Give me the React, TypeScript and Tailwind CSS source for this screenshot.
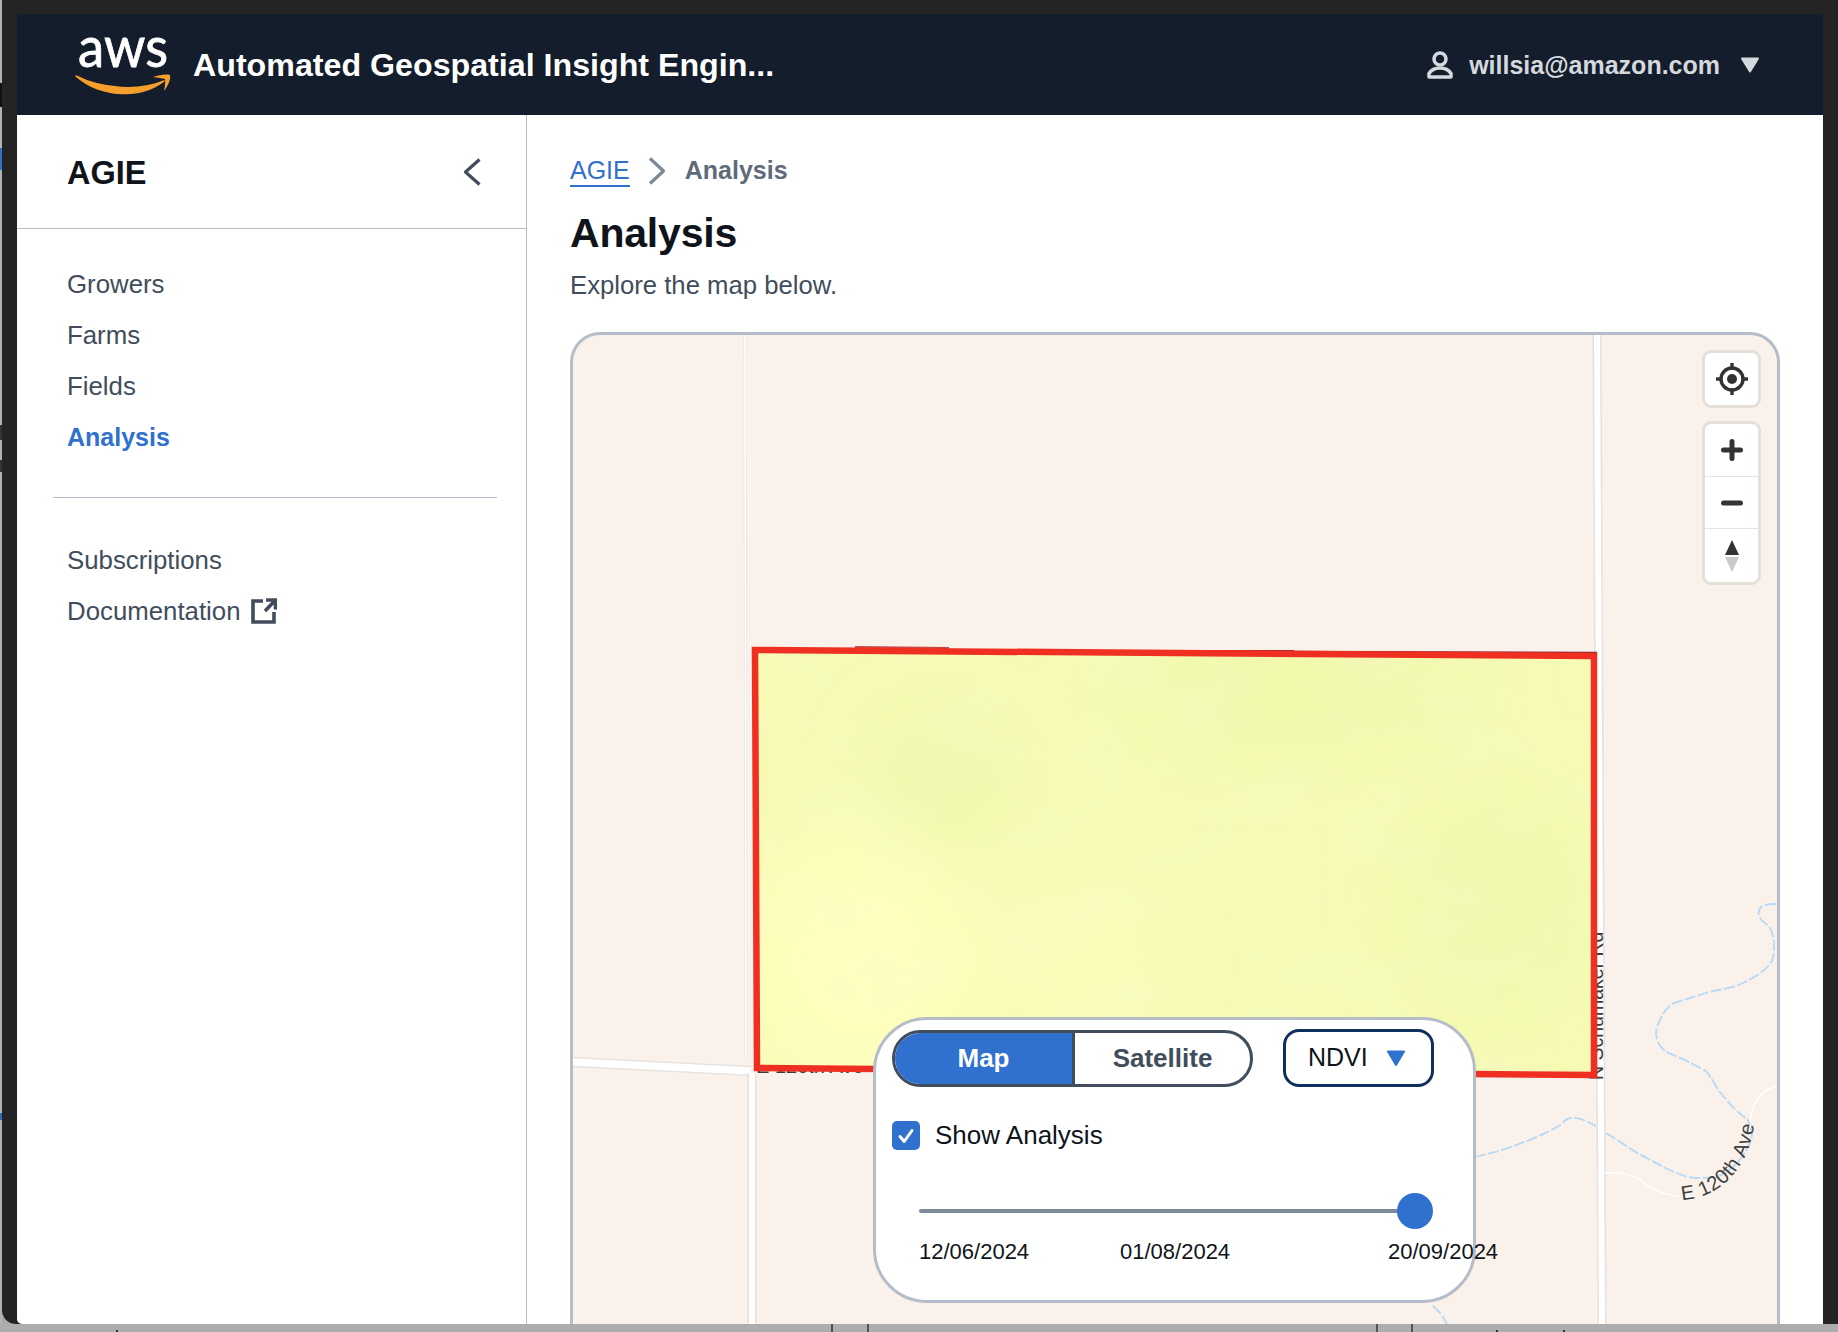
const navTop = ['Growers', 'Farms', 'Fields', 'Analysis'];

const streams = [
  'M1476 1156 L1500 1150 C1515 1145 1525 1141 1533 1138 C1545 1133 1555 1128 1563 1123 C1566 1119 1568 1117 1572 1117 C1580 1116 1588 1120 1597 1125',
  'M1607 1132 C1620 1140 1630 1147 1640 1153 C1652 1159 1662 1165 1673 1170 C1683 1175 1692 1177 1700 1177 C1710 1177 1716 1176 1720 1175 C1730 1170 1736 1165 1740 1160 C1746 1152 1752 1143 1753 1133 C1752 1126 1750 1120 1748 1118',
  'M1777 903 C1770 903 1765 904 1763 905 C1759 909 1759 912 1760 915 C1762 920 1766 922 1770 925 C1774 932 1775 938 1775 943 C1775 950 1775 955 1773 960 C1769 966 1765 970 1760 973 C1752 978 1745 982 1737 985 C1727 988 1717 989 1707 992 C1695 996 1683 999 1673 1003 C1668 1007 1665 1011 1663 1015 C1659 1022 1657 1028 1657 1033 C1658 1040 1660 1044 1663 1047 C1667 1051 1672 1053 1677 1055 C1688 1060 1698 1065 1707 1070 C1712 1076 1716 1084 1720 1090 C1725 1096 1729 1101 1733 1105 C1738 1110 1743 1115 1748 1118',
  'M1434 1305 C1442 1312 1446 1318 1449 1326',
];

const MapDrawing = () => (
  <svg viewBox="574 334 1204 990" className="absolute inset-0 h-[990px] w-[1204px]">
    <defs>
      <clipPath id="field-clip">
        <polygon points="756,649 1595,655 1595,1074 758,1067" />
      </clipPath>
      <filter id="soft">
        <feGaussianBlur stdDeviation="38" />
      </filter>
      <filter id="mottle" x="0" y="0" width="100%" height="100%">
        <feTurbulence type="fractalNoise" baseFrequency="0.012 0.018" numOctaves="4" seed="7" />
        <feColorMatrix type="matrix" values="0 0 0 0 0.92  0 0 0 0 0.96  0 0 0 0 0.62  0.8 0 0 0 -0.32" />
      </filter>
      <path id="e120-curve" d="M1683 1199 C1722 1197 1752 1166 1756 1116" />
    </defs>

    {/* roads */}
    <g fill="none">
      <path d="M746 334 L747 1058" stroke="#e7e4e0" strokeWidth="3" />
      <path d="M746 334 L747 1058" stroke="#ffffff" strokeWidth="1.5" />
      <path d="M573 1061 L752 1070" stroke="#e4e1de" strokeWidth="10" />
      <path d="M573 1061 L752 1070" stroke="#ffffff" strokeWidth="7.500" />
      <path d="M753 1072 L753 1324" stroke="#e4e1de" strokeWidth="9" />
      <path d="M753 1072 L753 1324" stroke="#ffffff" strokeWidth="6" />
      <path d="M1598 334 L1603 1324" stroke="#e4e1de" strokeWidth="9" />
      <path d="M1598 334 L1603 1324" stroke="#ffffff" strokeWidth="6" />
      <path d="M1606 1172 C1625 1171 1635 1174 1645 1182 C1660 1193 1675 1196 1695 1196" stroke="#ffffff" strokeWidth="1.5" />
      <path d="M1777 1085 C1760 1090 1750 1105 1751 1130" stroke="#ffffff" strokeWidth="1.5" />
    </g>

    {/* water */}
    <g fill="none" stroke="#b5d9f7" strokeWidth="1.8" strokeDasharray="11 2.5">
      {streams.map((d, i) => (
        <path key={i} d={d} />
      ))}
    </g>

    {/* labels */}
    <text transform="translate(1604 1079) rotate(-90)" fontSize="19.5" fill="#3a3a3a" fontFamily="Liberation Sans, sans-serif">
      N Schumaker Rd
    </text>
    <text x="757" y="1072" fontSize="20" fill="#3a3a3a" fontFamily="Liberation Sans, sans-serif">
      E 120th Ave
    </text>
    <text fontSize="20" fill="#3f3f3f" fontFamily="Liberation Sans, sans-serif" letterSpacing="0.6">
      <textPath href="#e120-curve">E 120th Ave</textPath>
    </text>

    {/* field */}
    <g clipPath="url(#field-clip)">
      <rect x="750" y="640" width="850" height="440" fill="#f6fab3" />
      <g filter="url(#soft)">
        <ellipse cx="860" cy="960" rx="120" ry="130" fill="#feffbe" />
        <ellipse cx="1080" cy="960" rx="70" ry="80" fill="#fcfdba" />
        <ellipse cx="940" cy="780" rx="50" ry="50" fill="#ecf6a6" />
        <ellipse cx="1300" cy="690" rx="180" ry="50" fill="#eff8a8" />
        <ellipse cx="1500" cy="900" rx="90" ry="110" fill="#f1f8ab" />
      </g>
      <rect x="750" y="640" width="850" height="440" filter="url(#mottle)" />
    </g>
    <path d="M856 646 L950 647" stroke="#c94a47" strokeWidth="2" />
    <path d="M1180 650 L1295 650" stroke="#9c2a2c" strokeWidth="2" />
    <path d="M1295 651 L1598 652" stroke="#8f2730" strokeWidth="2.5" />
    <polygon points="756,649 1595,655 1595,1074 758,1067" fill="none" stroke="#ee2f22" strokeWidth="6.500" />
  </svg>
);

const MapButtons = () => (
  <div className="absolute right-[16px] top-[15px] flex flex-col gap-[13px]">
    <div className="flex h-[58px] w-[59px] items-center justify-center rounded-[9px] border-[3px] border-[#e5dfda] bg-white">
      <svg viewBox="0 0 32 32" className="h-[32px] w-[32px]" fill="none" stroke="#333333">
        <circle cx="16" cy="16" r="11" strokeWidth="3.4" />
        <circle cx="16" cy="16" r="5" fill="#333333" stroke="none" />
        <path d="M16 1v4M16 27v4M1 16h4M27 16h4" strokeWidth="3.4" strokeLinecap="round" />
      </svg>
    </div>
    <div className="flex h-[164px] w-[59px] flex-col rounded-[9px] border-[3px] border-[#e5dfda] bg-white">
      <div className="flex h-[53px] items-center justify-center border-b border-[#e3e3e3]">
        <svg viewBox="0 0 24 24" className="h-[24px] w-[24px]" stroke="#333333" strokeWidth="5" strokeLinecap="round">
          <path d="M3.5 12h17M12 3.5v17" />
        </svg>
      </div>
      <div className="flex h-[52px] items-center justify-center border-b border-[#e3e3e3]">
        <svg viewBox="0 0 24 24" className="h-[24px] w-[24px]" stroke="#333333" strokeWidth="5" strokeLinecap="round">
          <path d="M3.5 12h17" />
        </svg>
      </div>
      <div className="flex flex-1 items-center justify-center">
        <svg viewBox="0 0 16 32" className="h-[32px] w-[16px]">
          <polygon points="8,0 15,15 1,15" fill="#333333" />
          <polygon points="1,17 15,17 8,32" fill="#c9c9c9" />
        </svg>
      </div>
    </div>
  </div>
);

const ControlPanel = () => (
  <div className="absolute bottom-[21px] left-[300px] h-[286px] w-[603px] rounded-[54px] border-[3px] border-[#b5bdc9] bg-white pl-[16px] pt-[9px]">
    <div className="flex items-center">
      <div className="flex h-[57px] w-[361px] overflow-hidden rounded-full border-[3px] border-[#414d5c] text-[26px] font-bold">
        <div className="flex w-[180px] items-center justify-center border-r-[3px] border-[#414d5c] bg-[#3070cf] text-white">Map</div>
        <div className="flex flex-1 items-center justify-center text-[#414d5c]">Satellite</div>
      </div>
      <div className="ml-[30px] flex h-[58px] w-[151px] items-center gap-[18px] rounded-[16px] border-[3px] border-[#0f2f5f] pl-[22px] text-[25px] text-[#0f141a]">
        <span>NDVI</span>
        <svg viewBox="0 0 20 16" className="h-[16px] w-[20px]">
          <path d="M2 1.5h16L10 15z" fill="#3070cf" stroke="#3070cf" strokeWidth="2" strokeLinejoin="round" />
        </svg>
      </div>
    </div>

    <div className="mt-[34px] flex items-center gap-[15px]">
      <div className="flex h-[29px] w-[28px] items-center justify-center rounded-[5px] bg-[#3070cf]">
        <svg viewBox="0 0 20 20" className="h-[20px] w-[20px]" fill="none" stroke="#ffffff" strokeWidth="3" strokeLinecap="round" strokeLinejoin="round">
          <path d="M4 10.5l4.2 5L16 4.5" />
        </svg>
      </div>
      <span className="text-[26px] leading-[29px] text-[#0f141a]">Show Analysis</span>
    </div>

    <div className="relative ml-[27px] mt-[59px] h-[4px] w-[511px] rounded-full bg-[#7d8998]">
      <div className="absolute right-[-3px] top-[-16px] h-[36px] w-[36px] rounded-full bg-[#3070cf]" />
    </div>

    <div className="ml-[27px] mt-[26px] grid w-max grid-cols-[201px_268px_auto] whitespace-nowrap text-[22px] leading-[26px] text-[#0f141a]">
      <span>12/06/2024</span>
      <span>01/08/2024</span>
      <span>20/09/2024</span>
    </div>
  </div>
);

const AwsLogo = () => (
  <svg viewBox="0 0 100 72" className="h-[72px] w-[100px] overflow-visible">
    <text x="5" y="38" fontSize="56" fontFamily="Lato, sans-serif" fill="#ffffff" stroke="#ffffff" strokeWidth="0.8" textLength="90" lengthAdjust="spacingAndGlyphs">
      aws
    </text>
    <path d="M3 47 C28 69 68 70 91 52 C68 62 30 61 3 47 Z" fill="#f59f2c" stroke="#f59f2c" strokeWidth="1.500" strokeLinejoin="round" />
    <path d="M80 48 C86 46 93 45 97 46 C98 50 95 57 91 62 C92 57 92.5 53 92 50 C89 49 85 49 80 48 Z" fill="#f59f2c" />
  </svg>
);

const App = () => {
  return (
    <div className="flex h-[1332px] w-[1838px] flex-col overflow-hidden bg-[#a9a9a9] font-['Liberation_Sans',sans-serif]">
      <div className="flex h-[1324px]">
        {/* desktop behind the window */}
        <div className="relative w-[2px] shrink-0 bg-[#b3b3b3]">
          <div className="absolute left-0 top-[83px] h-[24px] w-[2px] bg-[#111111]" />
          <div className="absolute left-0 top-[148px] h-[22px] w-[2px] bg-[#3070cf]" />
          <div className="absolute left-0 top-[425px] h-[15px] w-[2px] bg-[#333333]" />
          <div className="absolute left-0 top-[460px] h-[12px] w-[2px] bg-[#333333]" />
          <div className="absolute left-0 top-[1113px] h-[7px] w-[2px] bg-[#2f6cc0]" />
        </div>

        <div className="flex min-w-0 flex-1 flex-col rounded-bl-[14px] bg-[#242424] pl-[15px] pr-[15px] pt-[14px]">
          <div className="flex h-[1310px] flex-col rounded-bl-[5px] bg-white">
            <header className="flex h-[101px] shrink-0 items-center bg-[#131d2c] pl-[56px] pr-[63px] text-white">
              <AwsLogo />
              <h2 className="ml-[20px] pt-[2px] text-[32.2px] font-bold">Automated Geospatial Insight Engin...</h2>
              <div className="ml-auto flex items-center text-[#d5d9de]">
                <svg viewBox="0 0 26 28" className="h-[28px] w-[26px]" fill="none" stroke="#d5d9de" strokeWidth="3.500" strokeLinejoin="round">
                  <circle cx="13" cy="8" r="6" />
                  <path d="M2 26v-3.500c2.500-4 6.500-5.500 11-5.500s8.500 1.500 11 5.500v3.500z" />
                </svg>
                <span className="ml-[16px] pt-[2px] text-[25px] font-bold">willsia@amazon.com</span>
                <svg viewBox="0 0 20 16" className="ml-[20px] h-[16px] w-[20px]">
                  <path d="M2 1.500h16L10 14.500z" fill="#d5d9de" stroke="#d5d9de" strokeWidth="2" strokeLinejoin="round" />
                </svg>
              </div>
            </header>

            <div className="flex min-h-0 flex-1">
              <aside className="w-[510px] shrink-0 border-r border-[#b5bdc9]">
                <div className="flex h-[114px] items-center justify-between border-b border-[#b5bdc9] pl-[50px] pr-[45px]">
                  <span className="pt-[3px] text-[32.500px] font-bold text-[#0f141a]">AGIE</span>
                  <svg viewBox="0 0 18 28" className="h-[28px] w-[18px]" fill="none" stroke="#414d5c" strokeWidth="3.200" strokeLinejoin="round">
                    <path d="M16.500 1.500L2.500 14l14 12.500" />
                  </svg>
                </div>
                <nav className="flex flex-col gap-[21px] pl-[50px] pt-[40px] text-[25.800px] leading-[30px] text-[#414d5c]">
                  {navTop.map((item) => (
                    <a key={item} className={item === 'Analysis' ? 'text-[25px] font-bold text-[#3070cf]' : ''}>
                      {item}
                    </a>
                  ))}
                </nav>
                <hr className="ml-[36px] mr-[29px] mt-[45px] border-[#b5bdc9]" />
                <div className="flex flex-col gap-[21px] pl-[50px] pt-[47px] text-[25.800px] leading-[30px] text-[#414d5c]">
                  <a>Subscriptions</a>
                  <a className="flex items-center gap-[10px]">
                    Documentation
                    <svg viewBox="0 0 26 26" className="h-[26px] w-[26px]" fill="none" stroke="#414d5c" strokeWidth="3.600">
                      <path d="M12 3H2v21h21V14M14 13L24 2.500M15 2h9.500v9.500" />
                    </svg>
                  </a>
                </div>
              </aside>

              <main className="flex min-w-0 flex-1 flex-col pl-[43px] pr-[43px]">
                <div className="mt-[41px] flex h-[30px] items-center text-[25px]">
                  <a className="border-b-2 border-[#3070cf] leading-[29px] text-[#3070cf]">AGIE</a>
                  <svg viewBox="0 0 18 28" className="ml-[18px] h-[28px] w-[18px]" fill="none" stroke="#7d8998" strokeWidth="3.200" strokeLinejoin="round">
                    <path d="M2 1.500L15.500 14 2 26.500" />
                  </svg>
                  <span className="ml-[19px] font-bold text-[#5f6b7a]">Analysis</span>
                </div>
                <h1 className="mt-[24px] text-[41px] font-bold leading-[46px] tracking-[-0.2px] text-[#0f141a]">Analysis</h1>
                <p className="mt-[14px] text-[25.700px] leading-[30px] text-[#414d5c]">Explore the map below.</p>
                <div className="relative mt-[32px] min-h-0 flex-1 overflow-hidden rounded-t-[30px] border-x-[3px] border-t-[3px] border-[#b5bdc9] bg-[#f9f1ea]">
                  <MapDrawing />
                  <MapButtons />
                  <ControlPanel />
                </div>
              </main>
            </div>
          </div>
        </div>
      </div>

      {/* strip of the desktop under the window */}
      <div className="relative h-[8px] shrink-0 bg-[#adadad]">
        <div className="absolute left-[831px] top-0 h-[8px] w-[2px] bg-[#4b5563]" />
        <div className="absolute left-[867px] top-0 h-[8px] w-[2px] bg-[#4b5563]" />
        <div className="absolute left-[1376px] top-0 h-[8px] w-[2px] bg-[#4b5563]" />
        <div className="absolute left-[1411px] top-0 h-[8px] w-[2px] bg-[#4b5563]" />
        <div className="absolute left-[116px] top-[6px] h-[2px] w-[2px] bg-[#333333]" />
        <div className="absolute left-[1496px] top-[6px] h-[2px] w-[2px] bg-[#333333]" />
        <div className="absolute left-[1563px] top-[6px] h-[2px] w-[2px] bg-[#333333]" />
      </div>
    </div>
  );
};

export default App;
